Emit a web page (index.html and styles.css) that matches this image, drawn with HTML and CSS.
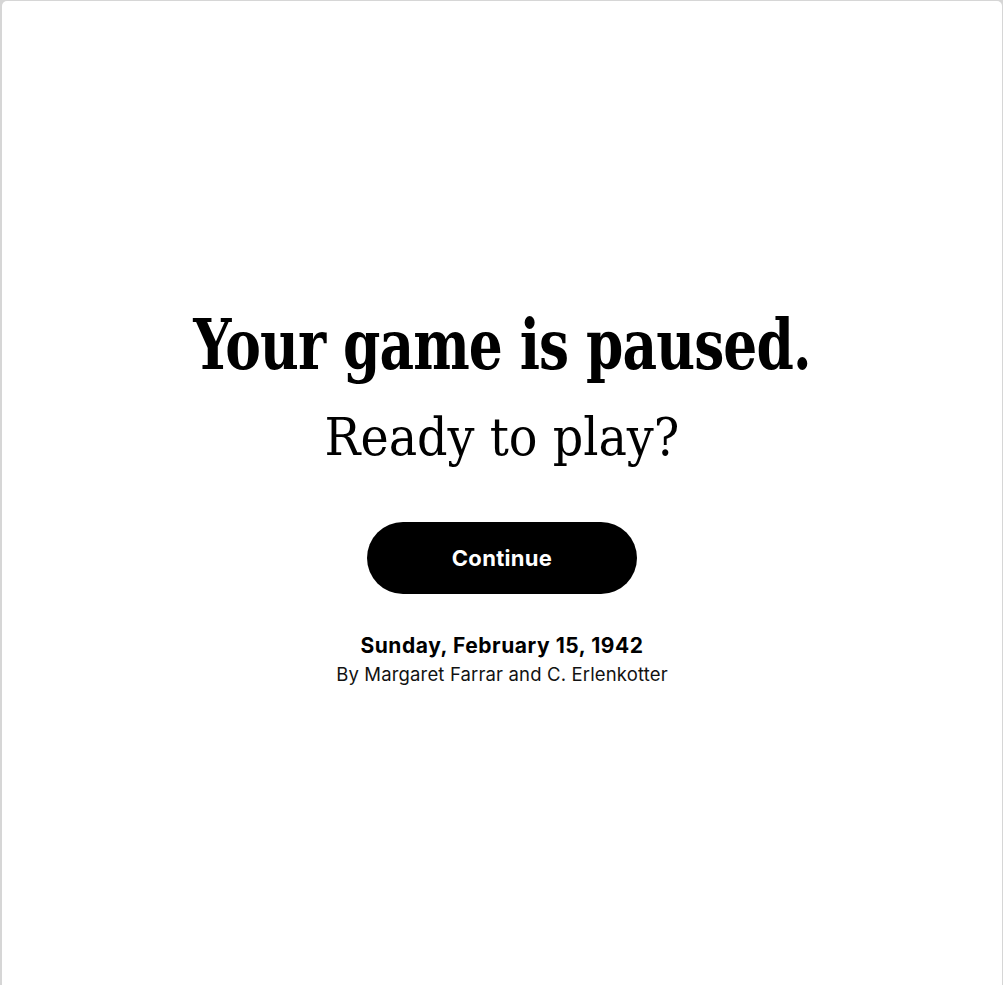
FILE: index.html
```html
<!DOCTYPE html>
<html lang="en">
<head>
<meta charset="utf-8">
<title>Your game is paused</title>
<link rel="stylesheet" href="styles.css">
</head>
<body>
<div class="modal">
  <div class="content">
    <h1 class="title"><span class="title-text">Your game is paused.</span></h1>
    <p class="subtitle">Ready to play?</p>
    <button class="continue" type="button">Continue</button>
    <div class="meta">
      <div class="date">Sunday, February 15, 1942</div>
      <div class="byline">By Margaret Farrar and C. Erlenkotter</div>
    </div>
  </div>
</div>
</body>
</html>
```
FILE: styles.css
```css
html, body {
  margin: 0;
  padding: 0;
  height: 100%;
}
body {
  background: #d6d6d6;
  overflow: hidden;
}
.modal {
  box-sizing: border-box;
  margin: 1px 1px 0 2px;
  height: calc(100vh - 1px);
  background: #ffffff;
  border-radius: 5px 5px 0 0;
  display: flex;
  flex-direction: column;
  align-items: center;
}
.content {
  padding-top: 304px;
  display: flex;
  flex-direction: column;
  align-items: center;
  text-align: center;
  color: #000;
}
.title {
  margin: 0;
  font-family: "DejaVu Serif Condensed", "DejaVu Serif", serif;
  font-weight: 700;
  font-size: 69px;
  line-height: 80px;
  letter-spacing: -1px;
  white-space: nowrap;
}
.title-text {
  display: inline-block;
  transform: scaleX(0.86);
}
.subtitle {
  margin: 20px 0 0;
  font-family: "DejaVu Serif Condensed", "DejaVu Serif", serif;
  font-weight: 400;
  font-size: 53px;
  line-height: 64px;
}
.continue {
  margin-top: 53px;
  width: 270px;
  height: 72px;
  border: none;
  border-radius: 36px;
  background: #000;
  color: #fff;
  font-family: Inter, "Liberation Sans", sans-serif;
  font-weight: 700;
  font-size: 22px;
  letter-spacing: 0.3px;
  cursor: pointer;
}
.meta {
  margin-top: 38px;
  font-family: Inter, "Liberation Sans", sans-serif;
}
.date {
  font-weight: 700;
  font-size: 21px;
  line-height: 28px;
  letter-spacing: 0.55px;
}
.byline {
  font-size: 18.5px;
  line-height: 29px;
  letter-spacing: 0.15px;
  color: #121212;
}
```
